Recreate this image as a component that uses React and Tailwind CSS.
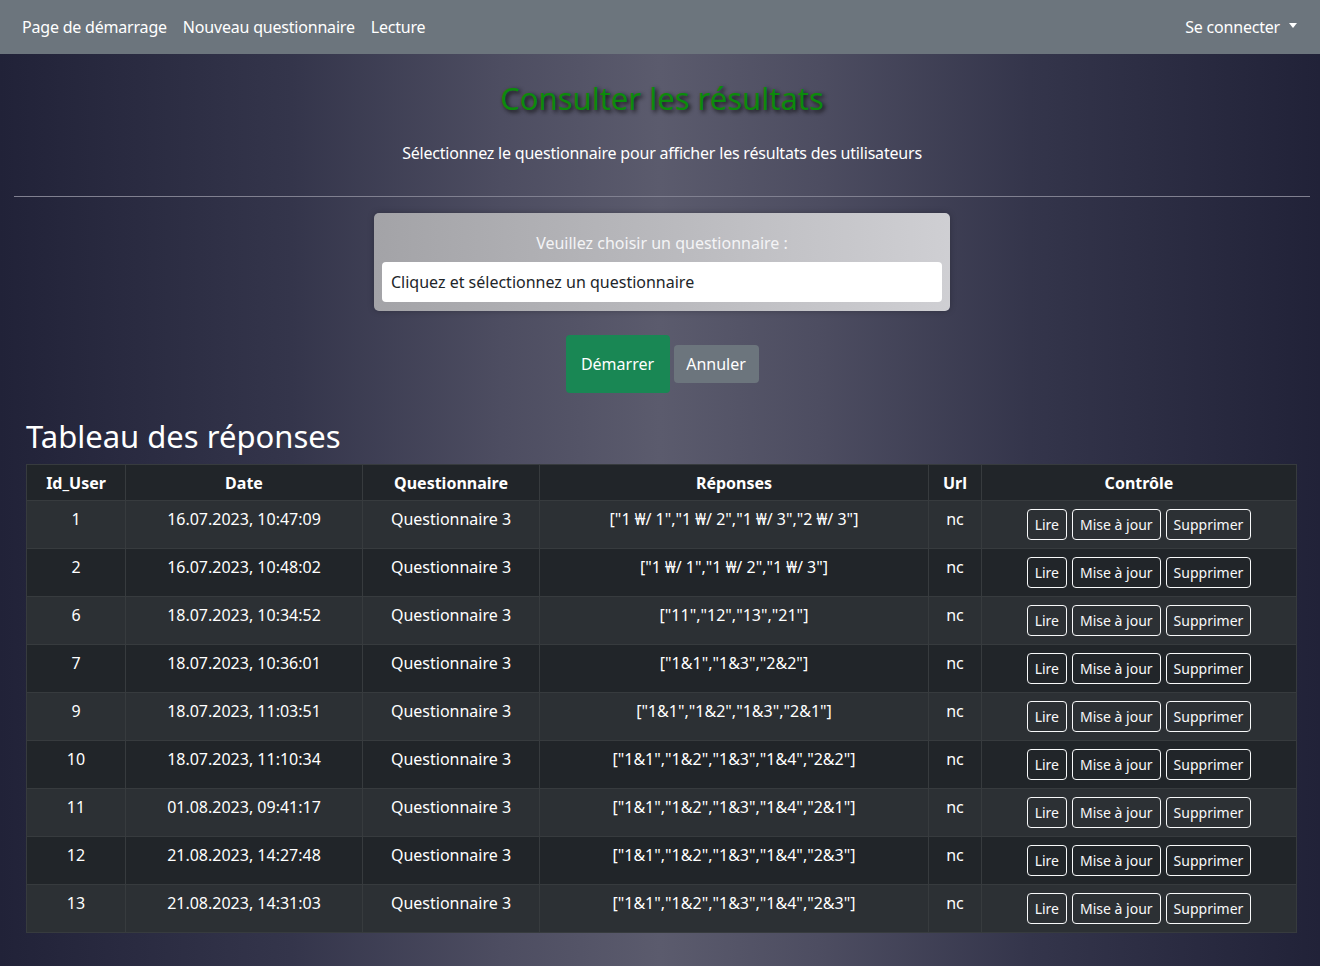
import React from "react";

const rows = [
  ["1", "16.07.2023, 10:47:09", '["1 ₩/ 1","1 ₩/ 2","1 ₩/ 3","2 ₩/ 3"]'],
  ["2", "16.07.2023, 10:48:02", '["1 ₩/ 1","1 ₩/ 2","1 ₩/ 3"]'],
  ["6", "18.07.2023, 10:34:52", '["11","12","13","21"]'],
  ["7", "18.07.2023, 10:36:01", '["1&1","1&3","2&2"]'],
  ["9", "18.07.2023, 11:03:51", '["1&1","1&2","1&3","2&1"]'],
  ["10", "18.07.2023, 11:10:34", '["1&1","1&2","1&3","1&4","2&2"]'],
  ["11", "01.08.2023, 09:41:17", '["1&1","1&2","1&3","1&4","2&1"]'],
  ["12", "21.08.2023, 14:27:48", '["1&1","1&2","1&3","1&4","2&3"]'],
  ["13", "21.08.2023, 14:31:03", '["1&1","1&2","1&3","1&4","2&3"]'],
];

const font = { fontFamily: '"Noto Sans", "Noto Sans CJK KR", sans-serif' };

function OutlineBtn({ children }) {
  return (
    <button className="h-[31px] px-[7px] border border-[#f8f9fa] rounded-[4px] text-[14px] text-[#f8f9fa] leading-[20px]">
      {children}
    </button>
  );
}

export default function App() {
  return (
    <div
      className="min-h-[966px] w-full text-white bg-[linear-gradient(to_right,#212238_0%,#34354b_22%,#4d4d61_38%,#5b5b6d_50%,#4d4d61_62%,#34354b_78%,#212238_100%)]"
      style={font}
    >
      <nav className="h-[54px] bg-[#6c757d] flex items-center justify-between pl-[14px] pr-[23px]">
        <div className="flex items-center text-[16px] text-white tracking-[-0.2px]">
          <a className="px-[8px]">Page de démarrage</a>
          <a className="px-[8px]">Nouveau questionnaire</a>
          <a className="px-[8px]">Lecture</a>
        </div>
        <div className="flex items-center text-[16px] text-white tracking-[-0.2px]">
          <span>Se connecter</span>
          <span className="ml-[9px] w-0 h-0 border-l-[4px] border-r-[4px] border-t-[5px] border-l-transparent border-r-transparent border-t-white mb-[3px]" />
        </div>
      </nav>

      <div className="pl-[14px] pr-[10px]">
        <h1
          className="text-center text-[31px] leading-[40px] pt-[24px] text-[#0c8a0c]"
          style={{ textShadow: "2px 2px 4px #111" }}
        >
          Consulter les résultats
        </h1>
        <p className="text-center text-[16px] leading-[24px] mt-[23px] text-white tracking-[-0.2px]">
          Sélectionnez le questionnaire pour afficher les résultats des utilisateurs
        </p>
        <div className="h-px bg-[#808090] mt-[31px]" />

        <div className="flex justify-center mt-[16px]">
          <div className="w-[576px] rounded-[5px] bg-[linear-gradient(to_right,#a3a3a7,#cfcfd3)] px-[8px] pt-[18px] pb-[9px] shadow-[0_0_6px_rgba(0,0,0,0.25)]">
            <div className="text-center text-[16px] leading-[24px] text-[#f4f4f6]">
              Veuillez choisir un questionnaire :
            </div>
            <div className="mt-[7px] h-[40px] bg-white rounded-[4px] flex items-center px-[9px] text-[16px] text-[#212529]">
              Cliquez et sélectionnez un questionnaire
            </div>
          </div>
        </div>

        <div className="flex justify-center items-center gap-[4px] mt-[24px]">
          <button className="w-[104px] h-[58px] rounded-[4px] bg-[#198754] text-white text-[16px]">
            Démarrer
          </button>
          <button className="w-[85px] h-[38px] rounded-[4px] bg-[#6c757d] text-white text-[16px]">
            Annuler
          </button>
        </div>

        <div className="pl-[12px]">
          <h2 className="text-[31px] leading-[40px] mt-[23px] text-white">Tableau des réponses</h2>
          <table className="w-[1271px] mt-[8px] border-collapse text-[16px] text-white">
            <thead>
              <tr className="bg-[#212529] h-[36px]">
                <th className="border border-[#373b3e] font-bold w-[99px] px-[8px]">Id_User</th>
                <th className="border border-[#373b3e] font-bold w-[237px] px-[8px]">Date</th>
                <th className="border border-[#373b3e] font-bold w-[177px] px-[8px]">Questionnaire</th>
                <th className="border border-[#373b3e] font-bold w-[389px] px-[8px]">Réponses</th>
                <th className="border border-[#373b3e] font-bold w-[53px] px-[8px]">Url</th>
                <th className="border border-[#373b3e] font-bold px-[8px]">Contrôle</th>
              </tr>
            </thead>
            <tbody>
              {rows.map((r, i) => (
                <tr key={i} className={i % 2 === 0 ? "bg-[#2c3034]" : "bg-[#212529]"}>
                  <td className="border border-[#373b3e] text-center align-top px-[8px] pt-[6px] h-[48px] leading-[24px]">{r[0]}</td>
                  <td className="border border-[#373b3e] text-center align-top px-[8px] pt-[6px] leading-[24px]">{r[1]}</td>
                  <td className="border border-[#373b3e] text-center align-top px-[8px] pt-[6px] leading-[24px]">Questionnaire 3</td>
                  <td className="border border-[#373b3e] text-center align-top px-[8px] pt-[6px] leading-[24px]">{r[2]}</td>
                  <td className="border border-[#373b3e] text-center align-top px-[8px] pt-[6px] leading-[24px]">nc</td>
                  <td className="border border-[#373b3e] align-top px-[8px] pt-[8px] pb-[8px]">
                    <div className="flex justify-center gap-[5px]">
                      <OutlineBtn>Lire</OutlineBtn>
                      <OutlineBtn>Mise à jour</OutlineBtn>
                      <OutlineBtn>Supprimer</OutlineBtn>
                    </div>
                  </td>
                </tr>
              ))}
            </tbody>
          </table>
        </div>
      </div>
    </div>
  );
}
